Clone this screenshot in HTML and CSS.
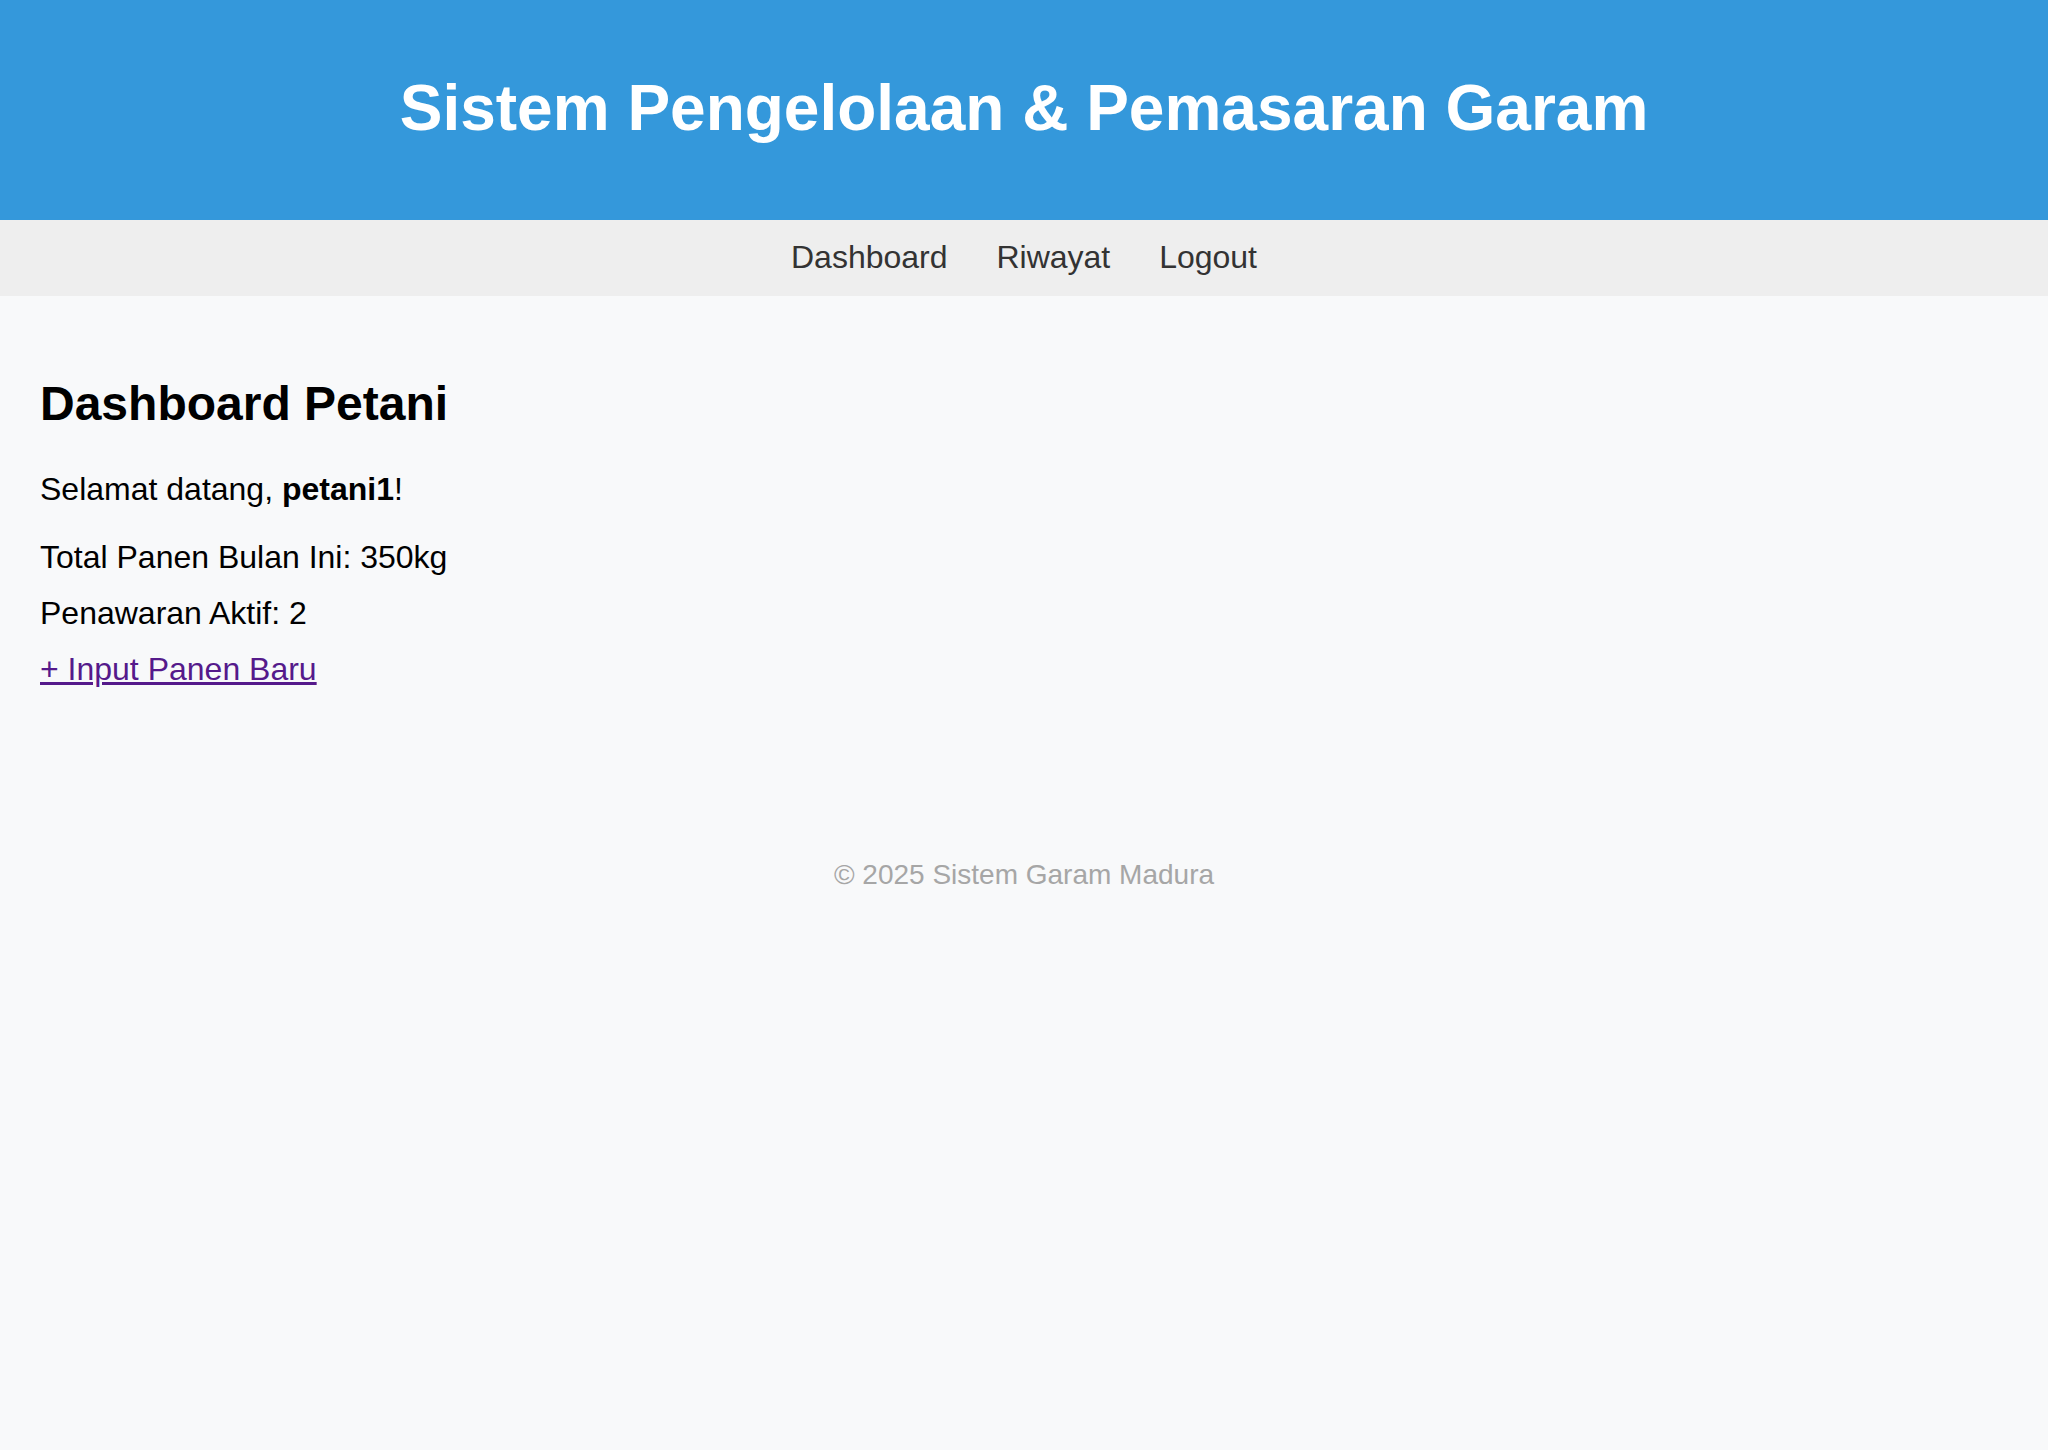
FILE: index.html
```html
<!DOCTYPE html>
<html lang="id">
<head>
<meta charset="utf-8">
<title>Dashboard Petani</title>
<link rel="stylesheet" href="styles.css">
</head>
<body>
<header class="site-header">
  <h1 class="site-title">Sistem Pengelolaan &amp; Pemasaran Garam</h1>
</header>
<nav class="site-nav">
  <a class="nav-link" href="#">Dashboard</a>
  <a class="nav-link" href="#">Riwayat</a>
  <a class="nav-link" href="#">Logout</a>
</nav>
<main class="content">
  <h2 class="page-title">Dashboard Petani</h2>
  <p class="welcome">Selamat datang, <strong>petani1</strong>!</p>
  <p class="stat">Total Panen Bulan Ini: 350kg</p>
  <p class="stat">Penawaran Aktif: 2</p>
  <p class="stat"><a class="action-link" href="#">+ Input Panen Baru</a></p>
</main>
<footer class="site-footer">&copy; 2025 Sistem Garam Madura</footer>
</body>
</html>
```

FILE: styles.css
```css
html, body {
  margin: 0;
  padding: 0;
}

body {
  background: #f8f9fa;
  font-family: "Liberation Sans", Arial, sans-serif;
  font-size: 32px;
  color: #000;
}

.site-header {
  background: #3498db;
  color: #fff;
  text-align: center;
  padding: 28px 30px 32px;
}

.site-title {
  margin: 43px 0;
  font-size: 64px;
  line-height: 74px;
  font-weight: bold;
}

.site-nav {
  background: #eeeeee;
  text-align: center;
  padding: 19px 20px 21px;
  line-height: 36px;
}

.nav-link {
  color: #333;
  text-decoration: none;
  margin: 0 20px;
  font-size: 32px;
}

.content {
  padding: 42px 40px 40px;
}

.page-title {
  font-size: 48px;
  line-height: 55px;
  margin: 38px 0 40px;
  font-weight: bold;
}

.welcome {
  margin: 32px 0;
  line-height: 36px;
}

.stat {
  margin: 20px 0;
  line-height: 36px;
}

.stat:last-child {
  margin-top: 19px;
}

.action-link {
  color: #551a8b;
  text-decoration: underline;
}

.site-footer {
  text-align: center;
  color: #a6a6a6;
  font-size: 28px;
  line-height: 32px;
  margin-top: 72px;
  padding: 40px 0;
}
```
